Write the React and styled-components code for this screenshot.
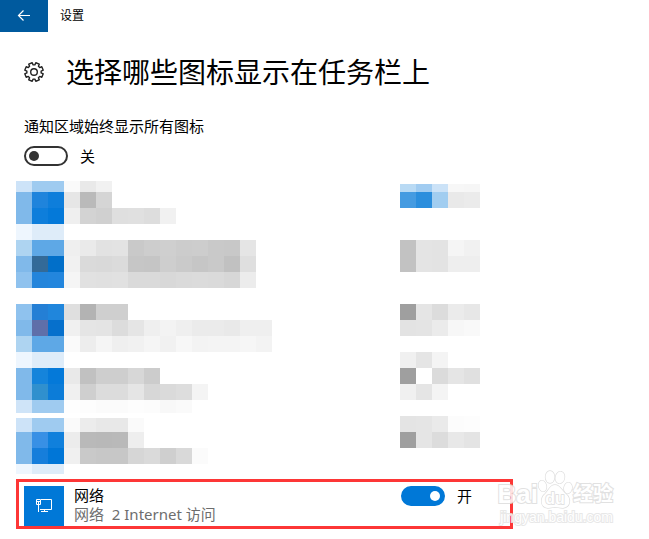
import React from "react";
import styled, { createGlobalStyle } from "styled-components";

const GlobalStyle = createGlobalStyle`
  * { box-sizing: border-box; }
  body {
    margin: 0;
    background: #fff;
    color: #000;
    font: 15px/20px "Noto Sans", "Noto Sans CJK SC", sans-serif;
  }
`;

const Page = styled.div`
  position: relative;
  max-width: 649px;
  padding-bottom: 10px;
`;

const TitleBar = styled.header`
  display: flex;
  align-items: center;
  gap: 12px;
  height: 32px;
  font-size: 12px;
`;

const BackButton = styled.button`
  display: grid;
  place-items: center;
  width: 48px;
  height: 32px;
  padding: 0;
  border: 0;
  background: #005a9e;
`;

const Heading = styled.div`
  display: flex;
  align-items: center;
  gap: 22px;
  padding: 20px 24px 0;
  height: 60px;
`;

const Title = styled.h1`
  margin: 0;
  font-size: 28px;
  line-height: 40px;
  font-weight: 400;
  white-space: nowrap;
`;

const Setting = styled.section`
  display: flex;
  flex-direction: column;
  gap: 10px;
  padding: 24px 24px 0;
  height: 89px;
`;

const ToggleLabel = styled.label`
  display: flex;
  align-items: center;
  gap: 12px;
  height: 20px;
`;

const Toggle = styled.input`
  appearance: none;
  display: flex;
  align-items: center;
  justify-content: flex-start;
  flex: none;
  width: 44px;
  height: 20px;
  margin: 0;
  padding: 0 3px;
  border: 2px solid #333;
  border-radius: 10px;
  background: #fff;

  &::before {
    content: "";
    width: 10px;
    height: 10px;
    border-radius: 50%;
    background: #333;
  }

  &:checked {
    justify-content: flex-end;
    border-color: #0078d7;
    background: #0078d7;
  }

  &:checked::before { background: #fff; }
`;

const AppList = styled.ul`
  display: flex;
  flex-direction: column;
  list-style: none;
  margin: 0;
  padding: 0 16px;
`;

const AppItem = styled.li`
  padding-bottom: ${(p) => p.$gap}px;
`;

const Band = styled.div`
  display: grid;
  grid-template-columns: 384px 1fr;
  align-items: end;
  height: ${(p) => p.$height}px;
`;

const Cells = styled.div`
  display: flex;
  height: ${(p) => p.$height}px;
`;

const Cell = styled.span`
  width: 16px;
  background: ${(p) => p.$color};
`;

const NetworkRow = styled.li`
  display: grid;
  grid-template-columns: 40px 1fr 109px;
  max-width: 497px;
  height: 50px;
  margin-top: 5px;
  padding: 4px 0 0 5px;
  border: 3px solid #fd3636;
`;

const NetworkTile = styled.span`
  display: grid;
  place-items: center;
  height: 40px;
  background: #0078d7;
`;

const NetworkText = styled.div`
  display: flex;
  flex-direction: column;
  padding-left: 10px;
  line-height: 19px;
  white-space: pre;
`;

const Status = styled.span`
  color: #6d6d6d;
`;

const Watermark = styled.div`
  position: absolute;
  right: 36px;
  bottom: 14px;
  display: flex;
  flex-direction: column;
  align-items: flex-end;
  color: #fff;
  opacity: 0.85;
  -webkit-text-stroke: 2px #dcdcdc;
  paint-order: stroke fill;
`;

const Brand = styled.div`
  display: flex;
  align-items: flex-end;
  font: 700 26px/30px "Liberation Sans", sans-serif;
`;

const BrandChinese = styled.span`
  font: 700 20px/32px "Noto Sans CJK SC", sans-serif;
`;

const Site = styled.span`
  font: 400 14px/16px "Liberation Sans", sans-serif;
  -webkit-text-stroke: 2px #e4e4e4;
`;

const PALE = "eef6fe deecf9 deecf9";

const hiddenApps = [
  {
    gap: 0,
    bands: [
      { height: 11, rightHeight: 8, left: "cde3f8 9fcbf0 9fcbf0 fafafa e9e9e9 f1f1f1", right: "b9daf4 a1ccf1 cbe2f7 f7f7f7 f6f6f6" },
      { left: "80b9ea 1f84dc 0e7edb e6e6e6 bababa d5d5d5", right: "459be1 2b8edd a1cdf0 e9e9e9 ebebeb" },
      { left: "80b9ea 0e7edb 0479d9 efefef d3d3d3 d0d0d0 dfdfdf e0e0e0 dddddd f1f1f1" },
      { left: PALE },
    ],
  },
  {
    gap: 16,
    bands: [
      { left: "aed4f1 5ea8e6 5ea8e6 efefef eaeaea e2e2e2 e3e3e3 c9c9c9 cdcdcd cfcfcf cccccc cdcdcd c9c9c9 c8c8c8 e5e5e5", right: "c2c2c2 e4e4e4 e3e3e3 f5f5f5 f1f1f1" },
      { left: "80b9ea 336a98 016fc9 f1f1f1 dadada d9d9d9 dbdbdb c6c6c6 c5c5c5 cecece cacaca c6c6c6 c9c9c9 c1c1c1 dfdfdf", right: "c2c2c2 e4e4e4 e3e3e3 eeeeee eeeeee" },
      { left: "8fc2ee 2485db 2386dd f5f5f5 e1e1e1 e0e0e0 e1e1e1 dadada dadada d8d8d8 dadada dbdbdb dadada d7d7d7 ececec" },
    ],
  },
  {
    gap: 0,
    bands: [
      { left: "8fc2ee 247fd5 2086dc dfdfdf b3b3b3 cfcfcf cfcfcf", right: "9f9f9f e5e5e5 dcdcdc ebebeb e7e7e7" },
      { left: "80b9ea 5f6fa9 0670cc f0f0f0 e5e5e5 e4e4e4 dcdcdc e5e5e5 efefef f3f3f3 efefef ebebeb ebebeb e9e9e9 efefef efefef", right: "e3e3e3 e4e4e4 ebebeb f7f7f7 f9f9f9" },
      { left: "aed4f1 5ea8e6 5ea8e6 fafafa ededed f5f5f5 efefef f1f1f1 f5f5f5 f1f1f1 f7f7f7 f3f3f3 f4f4f4 f4f4f4 f6f6f6 f3f3f3" },
      { left: PALE, right: "f0f0f0 e5e5e5 f4f4f4" },
    ],
  },
  {
    gap: 3,
    bands: [
      { left: "80b9ea 1584db 0479d9 e9e9e9 c1c1c1 cecece cecece d7d7d7 cccccc", right: "9f9f9f ffffff dbdbdb e5e5e5 e0e0e0" },
      { left: "80b9ea 3090ce 0c7cd8 f0f0f0 cfcfcf dcdcdc dcdcdc e5e5e5 d7d7d7 dadada dddddd f4f4f4", right: "f0f0f0 e5e5e5 f4f4f4" },
      { height: 13, left: "cfe4f8 9fcbf0 9fcbf0 fefefe fdfdfd fbfbfb fbfbfb fdfdfd fcfcfc f8f8f8 fafafa" },
    ],
  },
  {
    gap: 0,
    bands: [
      { leftHeight: 14, left: "cde3f8 9fcbf0 9fcbf0 fafafa ececec e8e8e8 e8e8e8 fafafa", right: "e4e4e4 e5e5e5 eaeaea fcfcfc fdfdfd" },
      { left: "80b9ea 3890e5 1080dc ececec b9b9b9 b8b8b8 b9b9b9 eeeeee", right: "9f9f9f e5e5e5 dcdcdc e8e8e8 e4e4e4" },
      { left: "80b9ea 167edb 0076d7 f0f0f0 c9c9c9 c7c7c7 c7c7c7 d6d6d6 dadada cfcfcf d9d9d9 fbfbfb" },
      { height: 10, left: PALE },
    ],
  },
];

function CellRun({ colors = "", height }) {
  return (
    <Cells $height={height}>
      {colors.split(" ").filter(Boolean).map((c, i) => <Cell key={i} $color={`#${c}`} />)}
    </Cells>
  );
}

function ObscuredApp({ app }) {
  return (
    <AppItem $gap={app.gap}>
      {app.bands.map(({ height = 16, leftHeight = height, rightHeight = height, left, right }, i) => (
        <Band key={i} $height={height}>
          <CellRun colors={left} height={leftHeight} />
          <CellRun colors={right} height={rightHeight} />
        </Band>
      ))}
    </AppItem>
  );
}

function BackArrow() {
  return (
    <svg width="14" height="12" viewBox="0 0 14 12" fill="none" stroke="#fff" strokeWidth="1.2" aria-hidden="true">
      <path d="M13 5.5H1.5M6.5 0.5l-5 5 5 5" />
    </svg>
  );
}

// Outline of an eight-toothed wheel centred on (10, 10).
const gearPath = (() => {
  const points = [];
  for (let i = 0; i < 8; i++) {
    const mid = (i * Math.PI) / 4 + Math.PI / 8;
    [[-0.27, 7.2], [-0.2, 9.4], [0.2, 9.4], [0.27, 7.2]].forEach(([a, r]) => {
      points.push(`${(10 + r * Math.cos(mid + a)).toFixed(2)} ${(10 + r * Math.sin(mid + a)).toFixed(2)}`);
    });
  }
  return `M${points.join("L")}Z`;
})();

function Gear() {
  return (
    <svg width="20" height="20" viewBox="0 0 20 20" fill="none" stroke="#222" strokeWidth="1.4" strokeLinejoin="round" aria-hidden="true">
      <path d={gearPath} />
      <circle cx="10" cy="10" r="3.3" />
    </svg>
  );
}

function NetworkIcon() {
  return (
    <svg width="16" height="14" viewBox="0 0 16 14" fill="none" stroke="#fff" aria-hidden="true">
      <path d="M5 0.5h10.5v10H4M8.5 10.5v2M5 12.5h7M0.5 0.5h4v5h-4zM2.5 3v10M1 2.5h3" />
    </svg>
  );
}

function Paw() {
  return (
    <svg width="35" height="39" viewBox="0 0 35 39" fill="#fff" stroke="#d8d8d8" strokeWidth="1.3" aria-hidden="true">
      <ellipse cx="12" cy="7" rx="4.5" ry="6" />
      <ellipse cx="22" cy="7.5" rx="4.5" ry="6" transform="rotate(12 22 7.5)" />
      <ellipse cx="4.5" cy="16" rx="3.8" ry="5.5" transform="rotate(-15 4.5 16)" />
      <ellipse cx="30" cy="18" rx="4" ry="5.5" transform="rotate(10 30 18)" />
      <path d="M17 15c-5 0-6 5-10 9-4 3-6 13 3 14 3 0 5-1 7-1s5 1 8 1c8-1 8-10 3-14-4-3-6-9-11-9z" />
      <text x="17" y="34" textAnchor="middle" fontFamily="Liberation Sans" fontWeight="700" fontSize="16" strokeWidth="1.5">du</text>
    </svg>
  );
}

export default function App() {
  return (
    <>
      <GlobalStyle />
      <Page>
        <TitleBar>
          <BackButton type="button" aria-label="返回"><BackArrow /></BackButton>
          <span>设置</span>
        </TitleBar>
        <main>
          <Heading>
            <Gear />
            <Title>选择哪些图标显示在任务栏上</Title>
          </Heading>
          <Setting>
            <span id="show-all">通知区域始终显示所有图标</span>
            <ToggleLabel>
              <Toggle type="checkbox" role="switch" aria-labelledby="show-all" />
              关
            </ToggleLabel>
          </Setting>
          <AppList>
            {hiddenApps.map((app, i) => <ObscuredApp key={i} app={app} />)}
            <NetworkRow>
              <NetworkTile><NetworkIcon /></NetworkTile>
              <NetworkText>
                <span id="network">网络</span>
                <Status>网络  2 Internet 访问</Status>
              </NetworkText>
              <ToggleLabel>
                <Toggle type="checkbox" role="switch" aria-labelledby="network" defaultChecked />
                开
              </ToggleLabel>
            </NetworkRow>
          </AppList>
        </main>
        <Watermark>
          <Brand>
            <span>Bai</span>
            <Paw />
            <BrandChinese>经验</BrandChinese>
          </Brand>
          <Site>jingyan.baidu.com</Site>
        </Watermark>
      </Page>
    </>
  );
}
